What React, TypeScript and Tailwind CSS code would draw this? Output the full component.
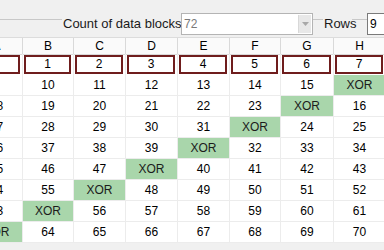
import React from "react";

const rows: (number | "XOR")[][] = [
  [9, 10, 11, 12, 13, 14, 15, "XOR"],
  [18, 19, 20, 21, 22, 23, "XOR", 16],
  [27, 28, 29, 30, 31, "XOR", 24, 25],
  [36, 37, 38, 39, "XOR", 32, 33, 34],
  [45, 46, 47, "XOR", 40, 41, 42, 43],
  [54, 55, "XOR", 48, 49, 50, 51, 52],
  [63, "XOR", 56, 57, 58, 59, 60, 61],
  ["XOR", 64, 65, 66, 67, 68, 69, 70],
];
const letters = ["A", "B", "C", "D", "E", "F", "G", "H"];

export default function App() {
  return (
    <div
      className="w-[384px] h-[250px] overflow-hidden bg-[#f0f0f0] text-black"
      style={{ fontFamily: '"Liberation Sans", Arial, sans-serif' }}
    >
      <div className="h-[37px] flex items-start pt-[13px]">
        <div className="w-[62px] h-px bg-[#c8c8c8] mt-[6px] shrink-0" />
        <div className="w-[118px] shrink-0 text-[13px] leading-[16px] pt-[3px] pl-[1px] text-[#1a1a1a] whitespace-nowrap">
          Count of data blocks
        </div>
        <div className="ml-[1px] w-[132px] h-[22px] shrink-0 border border-[#b4b4b4] bg-white flex items-stretch">
          <div className="flex-1 text-[12px] leading-[20px] pl-[2px] text-[#7a7a7a]">72</div>
          <div className="w-[13px] my-[1px] mr-[1px] bg-[#e8e8e8] border-l border-[#d8d8d8] flex items-center justify-center">
            <svg width="7" height="4" viewBox="0 0 7 4">
              <path d="M0 0 L7 0 L3.5 4 Z" fill="#a8a8a8" />
            </svg>
          </div>
        </div>
        <div className="w-[10px] h-px bg-[#c8c8c8] mt-[6px] shrink-0" />
        <div className="w-[29px] shrink-0 text-[13px] leading-[16px] pt-[3px] pl-[1px] text-[#1a1a1a]">Rows</div>
        <div className="w-[15px] h-px bg-[#c8c8c8] mt-[6px] shrink-0" />
        <div className="w-[30px] h-[22px] shrink-0 border border-[#7a7a7a] border-r-0 bg-white text-[12px] leading-[20px] pl-[2px]">
          9
        </div>
      </div>
      <div className="-ml-[29px] w-[416px] bg-white text-[12px]">
        <div className="grid grid-cols-[52px_51px_52px_52px_52px_51px_53px_52px] h-[17px] border-t border-[#dcdcdc] bg-[#fafafa]">
          {letters.map((l) => (
            <div key={l} className="border-r border-b border-[#d9d9d9] text-center leading-[16px]">
              {l}
            </div>
          ))}
        </div>
        <div className="grid grid-cols-[52px_51px_52px_52px_52px_51px_53px_52px] h-[21px]">
          {letters.map((l, i) => (
            <div key={l} className="pl-[1px] pr-[2px] pt-px pb-px border-r border-[#ececec]">
              <div className="h-full border-2 border-[#6f1d1d] bg-white text-center leading-[15px]">{i}</div>
            </div>
          ))}
        </div>
        {rows.map((r, ri) => (
          <div key={ri} className="grid grid-cols-[52px_51px_52px_52px_52px_51px_53px_52px] h-[21px]">
            {r.map((v, ci) =>
              v === "XOR" ? (
                <div key={ci} className="border-r border-b border-[#ececec] bg-[#a9d6ab] text-center leading-[20px] text-[#1c1c1c]">
                  XOR
                </div>
              ) : (
                <div key={ci} className="border-r border-b border-[#ececec] text-center leading-[20px]">
                  {v}
                </div>
              )
            )}
          </div>
        ))}
      </div>
    </div>
  );
}
